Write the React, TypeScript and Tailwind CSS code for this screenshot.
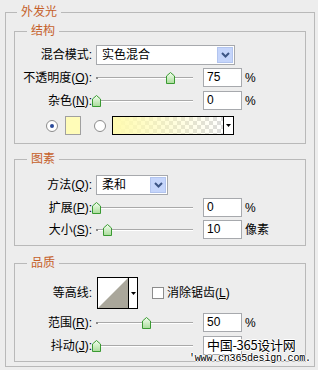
import React from "react";

const font = "font-['Liberation_Sans','Noto_Sans_CJK_SC',sans-serif]";

function Thumb() {
    return (
        <svg width="9" height="12" viewBox="0 0 9 12">
            <defs>
                <linearGradient id="tg" x1="0" y1="0" x2="0" y2="1">
                    <stop offset="0" stopColor="#f4fff0" />
                    <stop offset="1" stopColor="#a9dc9a" />
                </linearGradient>
            </defs>
            <path d="M0.5 4 L4.5 0.5 L8.5 4 V11.5 H0.5 Z" fill="url(#tg)" stroke="#3a9a32" />
        </svg>
    );
}

function Slider({ at }: { at: number }) {
    return (
        <div className="relative w-[107px] h-[19px] shrink-0">
            <div className="absolute left-[4px] top-[9px] w-[97px] h-[2px] border-t border-[#a9a9a9] bg-white" />
            <div className="absolute left-[4px] top-[9px] w-[2px] h-[2px] bg-[#8a8a8a]" />
            <div className="absolute top-[4px]" style={{ left: at - 4 }}>
                <Thumb />
            </div>
        </div>
    );
}

function Field({ value }: { value: string }) {
    return (
        <div className="ml-[4px] w-[39px] h-[19px] border border-[#a7a9ad] bg-white pl-[3px] text-[12px] leading-[17px] text-black">
            {value}
        </div>
    );
}

function Chevron() {
    return (
        <div className="w-[16px] h-[16px] bg-[#c5d5fb] border border-[#b2c4ee] flex items-center justify-center">
            <svg width="9" height="6" viewBox="0 0 9 6">
                <path d="M1 1 L4.5 4.5 L8 1" fill="none" stroke="#3d5585" strokeWidth="2" />
            </svg>
        </div>
    );
}

function Select({ text, w }: { text: string; w: string }) {
    return (
        <div className={`ml-[4px] ${w} h-[20px] border border-[#a7a9ad] bg-white flex items-center justify-between pl-[5px] pr-[1px]`}>
            <span className="text-[12px]">{text}</span>
            <Chevron />
        </div>
    );
}

function Label({ children }: { children: React.ReactNode }) {
    return <div className="w-[77px] shrink-0 text-right text-[12px] leading-[14px] whitespace-nowrap">{children}</div>;
}

function U({ c }: { c: string }) {
    return <span className="underline underline-offset-1">{c}</span>;
}

function Group({ title, className, children }: { title: string; className: string; children: React.ReactNode }) {
    return (
        <fieldset className={`mx-[8px] border border-[#b9b9b9] ${className}`}>
            <legend className="ml-[12px] px-[4px] text-[12px] leading-[14px] text-[#c5602a]">{title}</legend>
            {children}
        </fieldset>
    );
}

function Radio({ checked }: { checked?: boolean }) {
    return (
        <div className="w-[12px] h-[12px] rounded-full border border-[#8c8c8c] bg-white flex items-center justify-center shrink-0">
            {checked && <div className="w-[4px] h-[4px] rounded-full bg-[#2a4a9a]" />}
        </div>
    );
}

export default function App() {
    return (
        <div className={`relative w-[318px] h-[370px] overflow-hidden bg-[#ededed] pt-[5px] text-black ${font}`}>
            <fieldset className="ml-[5px] w-[310px] border border-[#b9b9b9] pb-[4px]">
                <legend className="ml-[11px] px-[4px] text-[12px] leading-[14px] text-[#c5602a]">外发光</legend>

                {/* 结构 */}
                <Group title="结构" className="mt-[5px] pb-[8px]">
                    <div className="mt-[7px] flex items-center">
                        <Label>混合模式:</Label>
                        <Select text="实色混合" w="w-[139px]" />
                    </div>
                    <div className="mt-[3px] flex items-center">
                        <Label>不透明度(<U c="O" />):</Label>
                        <Slider at={78} />
                        <Field value="75" />
                        <span className="ml-[3px] text-[12px]">%</span>
                    </div>
                    <div className="mt-[4px] flex items-center">
                        <Label>杂色(<U c="N" />):</Label>
                        <Slider at={4} />
                        <Field value="0" />
                        <span className="ml-[3px] text-[12px]">%</span>
                    </div>
                    <div className="mt-[6px] flex items-center pl-[31px] h-[19px]">
                        <Radio checked />
                        <div className="ml-[7px] w-[16px] h-[19px] bg-[#fffcb8] border border-[#a0a0a0]" />
                        <div className="ml-[13px]">
                            <Radio />
                        </div>
                        <div className="ml-[6px] w-[122px] h-[19px] border border-black flex bg-white">
                            <div className="flex-1 bg-[repeating-conic-gradient(#dcdcdc_0_25%,#ffffff_0_50%)] bg-[length:8px_8px]">
                                <div className="w-full h-full bg-gradient-to-r from-[#fffbb0] to-transparent" />
                            </div>
                            <div className="w-[10px] border-l border-black flex items-center justify-center">
                                <svg width="5" height="3" viewBox="0 0 5 3">
                                    <path d="M0 0 H5 L2.5 3 Z" fill="#000" />
                                </svg>
                            </div>
                        </div>
                    </div>
                </Group>

                {/* 图素 */}
                <Group title="图素" className="mt-[8px] pb-[6px]">
                    <div className="mt-[9px] flex items-center">
                        <Label>方法(<U c="Q" />):</Label>
                        <Select text="柔和" w="w-[72px]" />
                    </div>
                    <div className="mt-[3px] flex items-center">
                        <Label>扩展(<U c="P" />):</Label>
                        <Slider at={4} />
                        <Field value="0" />
                        <span className="ml-[3px] text-[12px]">%</span>
                    </div>
                    <div className="mt-[3px] flex items-center">
                        <Label>大小(<U c="S" />):</Label>
                        <Slider at={15} />
                        <Field value="10" />
                        <span className="ml-[3px] text-[12px]">像素</span>
                    </div>
                </Group>

                {/* 品质 */}
                <Group title="品质" className="mt-[10px] pb-[6px]">
                    <div className="mt-[7px] flex items-center">
                        <Label>等高线:</Label>
                        <div className="ml-[5px] w-[41px] h-[32px] border border-black flex bg-white">
                            <svg width="30" height="30" viewBox="0 0 30 30" className="shrink-0">
                                <polygon points="0,30 30,0 30,30" fill="#aaa79b" />
                            </svg>
                            <div className="flex-1 border-l border-black flex items-center justify-center">
                                <svg width="5" height="3" viewBox="0 0 5 3">
                                    <path d="M0 0 H5 L2.5 3 Z" fill="#000" />
                                </svg>
                            </div>
                        </div>
                        <div className="ml-[14px] w-[12px] h-[12px] border border-[#8c8c8c] bg-white" />
                        <span className="ml-[3px] text-[12px]">消除锯齿(<U c="L" />)</span>
                    </div>
                    <div className="mt-[4px] flex items-center">
                        <Label>范围(<U c="R" />):</Label>
                        <Slider at={54} />
                        <Field value="50" />
                        <span className="ml-[3px] text-[12px]">%</span>
                    </div>
                    <div className="mt-[4px] flex items-center">
                        <Label>抖动(<U c="J" />):</Label>
                        <Slider at={4} />
                        <Field value="" />
                    </div>
                </Group>
            </fieldset>

            {/* watermark */}
            <div className="absolute left-[189px] top-[337px] text-black [text-shadow:1px_0_#fff,-1px_0_#fff,0_1px_#fff,0_-1px_#fff]">
                <div className="pl-[18px] text-[13px] leading-[16px] tracking-[-0.3px] font-['Noto_Sans_CJK_SC',sans-serif]">中国-365设计网</div>
                <div className="text-[10px] leading-[11px] tracking-[-0.2px] font-['Liberation_Mono',monospace]">'www.cn365design.com.</div>
            </div>
        </div>
    );
}
